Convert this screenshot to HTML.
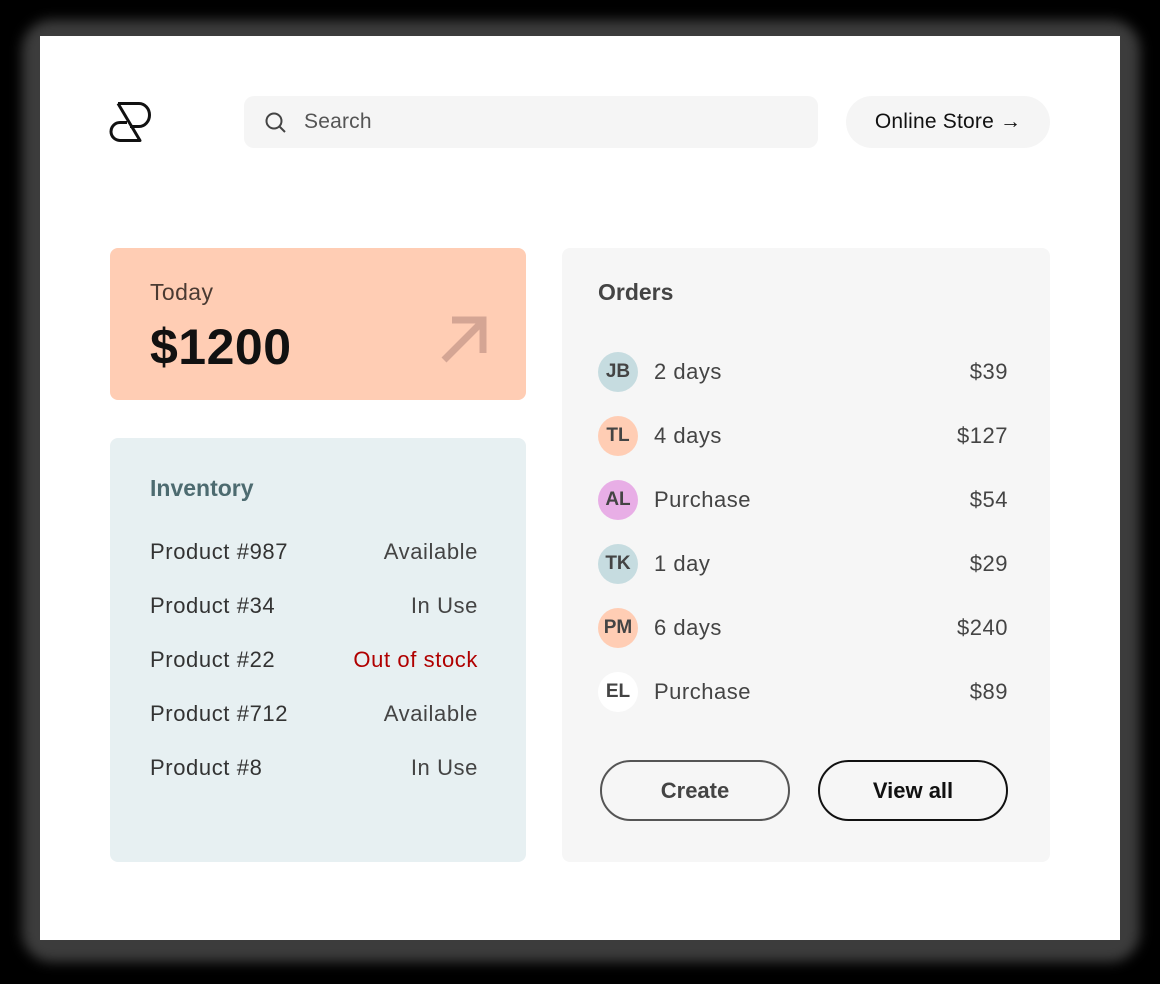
<!DOCTYPE html>
<html><head><meta charset="utf-8"><style>
*{margin:0;padding:0;box-sizing:border-box}
body{width:1160px;height:984px;background:#000;position:relative;overflow:hidden;font-family:"Liberation Sans",sans-serif;color:#333}
.shadow{position:absolute;left:22px;top:20px;width:1118px;height:942px;background:#3c3c3c;border-radius:30px;filter:blur(6px)}
.card{position:absolute;left:40px;top:36px;width:1080px;height:904px;background:#fff}
.abs{position:absolute}
.search{left:244px;top:96px;width:574px;height:52px;background:#f5f5f5;border-radius:10px}
.search span{position:absolute;left:60px;top:14px;font-size:21px;color:#555;letter-spacing:0.2px}
.store{left:846px;top:96px;width:204px;height:52px;background:#f5f5f5;border-radius:26px;font-size:21px;color:#111;text-align:center;line-height:52px;letter-spacing:0.2px}
.today{left:110px;top:248px;width:416px;height:152px;background:#ffcdb4;border-radius:8px}
.inv{left:110px;top:438px;width:416px;height:424px;background:#e7f0f2;border-radius:8px}
.orders{left:562px;top:248px;width:488px;height:614px;background:#f6f6f6;border-radius:8px}
.row{position:absolute;left:40px;right:48px;font-size:22px;letter-spacing:0.6px;color:#333;display:flex;justify-content:space-between}
.orow{position:absolute;left:36px;right:42px;height:40px;display:flex;align-items:center;font-size:22px;letter-spacing:0.5px;color:#444}
.av{width:40px;height:40px;border-radius:50%;font-size:19px;font-weight:bold;color:#444;display:flex;align-items:center;justify-content:center;margin-right:16px;letter-spacing:0}
.orow .p{margin-left:auto}
.btn{position:absolute;top:512px;width:190px;height:61px;border-radius:31px;font-size:22px;font-weight:bold;display:flex;align-items:center;justify-content:center}
</style></head><body>
<div class="shadow"></div>
<div class="card"></div>
<svg class="abs" style="left:0;top:0" width="1160" height="984"><path d="M118 103.5 H139 A10.5 11.5 0 0 1 139 126.5 H130 M127 122.5 H120 A9 9 0 0 0 120 140.5 H140 L118 103.5" fill="none" stroke="#111" stroke-width="3" stroke-linejoin="round"/></svg>
<div class="abs search"><svg class="abs" style="left:20px;top:15px" width="24" height="24"><circle cx="10" cy="10" r="7.5" fill="none" stroke="#444" stroke-width="2"/><path d="M15.5 15.5 L21 21" stroke="#444" stroke-width="2"/></svg><span>Search</span></div>
<div class="abs store">Online Store →</div>
<div class="abs today">
<div class="abs" style="left:40px;top:31px;font-size:23px;color:#4a3a32;letter-spacing:0.4px">Today</div>
<div class="abs" style="left:40px;top:70px;font-size:50px;font-weight:bold;color:#111;letter-spacing:0.5px">$1200</div>
<svg class="abs" style="left:330px;top:68px" width="48" height="48"><path d="M4 44 L42 6 M12 4 H43 V37" fill="none" stroke="#d4a594" stroke-width="7"/></svg>
</div>
<div class="abs inv">
<div class="abs" style="left:40px;top:37px;font-size:23px;font-weight:bold;color:#4d6b70">Inventory</div>
<div class="row" style="top:101px"><span>Product #987</span><span style="color:#444">Available</span></div>
<div class="row" style="top:155px"><span>Product #34</span><span style="color:#444">In Use</span></div>
<div class="row" style="top:209px"><span>Product #22</span><span style="color:#b00000">Out of stock</span></div>
<div class="row" style="top:263px"><span>Product #712</span><span style="color:#444">Available</span></div>
<div class="row" style="top:317px"><span>Product #8</span><span style="color:#444">In Use</span></div>
</div>
<div class="abs orders">
<div class="abs" style="left:36px;top:31px;font-size:23px;font-weight:bold;color:#444">Orders</div>
<div class="orow" style="top:104px"><div class="av" style="background:#c6dce0">JB</div>2 days<span class="p">$39</span></div>
<div class="orow" style="top:168px"><div class="av" style="background:#ffcdb4">TL</div>4 days<span class="p">$127</span></div>
<div class="orow" style="top:232px"><div class="av" style="background:#e8aee6">AL</div>Purchase<span class="p">$54</span></div>
<div class="orow" style="top:296px"><div class="av" style="background:#c6dce0">TK</div>1 day<span class="p">$29</span></div>
<div class="orow" style="top:360px"><div class="av" style="background:#ffcdb4">PM</div>6 days<span class="p">$240</span></div>
<div class="orow" style="top:424px"><div class="av" style="background:#fff">EL</div>Purchase<span class="p">$89</span></div>
<div class="btn" style="left:38px;border:2px solid #555;color:#444">Create</div>
<div class="btn" style="left:256px;border:2px solid #111;color:#111">View all</div>
</div>
</body></html>
